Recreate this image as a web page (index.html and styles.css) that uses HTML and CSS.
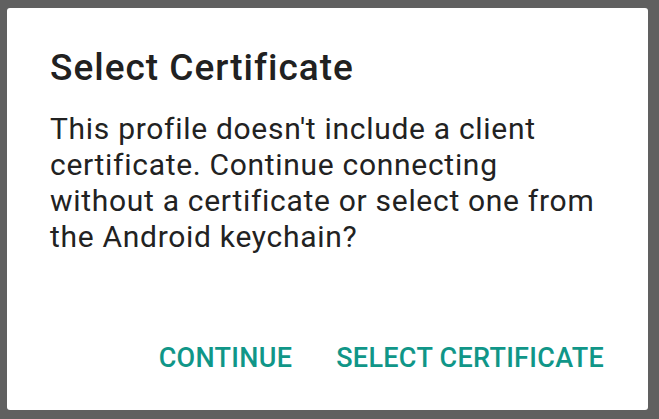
FILE: index.html
```html
<!DOCTYPE html>
<html>
<head>
<meta charset="utf-8">
<link rel="stylesheet" href="styles.css">
</head>
<body>
<div class="screen">
  <div class="dialog">
    <h1 class="title">Select Certificate</h1>
    <p class="message">This profile doesn't include a client<br>certificate. Continue connecting<br>without a certificate or select one from<br>the Android keychain?</p>
    <div class="actions">
      <button class="btn">CONTINUE</button>
      <button class="btn">SELECT CERTIFICATE</button>
    </div>
  </div>
</div>
</body>
</html>
```
FILE: styles.css
```css
html, body {
  margin: 0;
  padding: 0;
  background: #606060;
}
.screen {
  width: 659px;
  height: 419px;
  padding: 8px 11px 9px 7px;
  box-sizing: border-box;
}
.dialog {
  background: #ffffff;
  border-radius: 3px;
  height: 402px;
  box-sizing: border-box;
  padding: 38px 44px 0 43px;
  display: flex;
  flex-direction: column;
  font-family: Roboto, "Noto Sans", sans-serif;
}
.title {
  margin: 0;
  font-size: 37px;
  font-weight: 500;
  line-height: 44px;
  letter-spacing: 1px;
  color: #212121;
}
.message {
  margin: 21px 0 0 0;
  font-size: 30px;
  line-height: 36px;
  letter-spacing: 0.7px;
  color: #222222;
  white-space: nowrap;
}
.actions {
  margin-top: auto;
  margin-bottom: 36px;
  display: flex;
  justify-content: flex-end;
  gap: 44px;
}
.btn {
  background: none;
  border: none;
  padding: 0;
  font-family: Roboto, "Noto Sans", sans-serif;
  font-weight: 500;
  font-size: 27px;
  line-height: 32px;
  letter-spacing: 0.3px;
  color: #109688;
}
```
